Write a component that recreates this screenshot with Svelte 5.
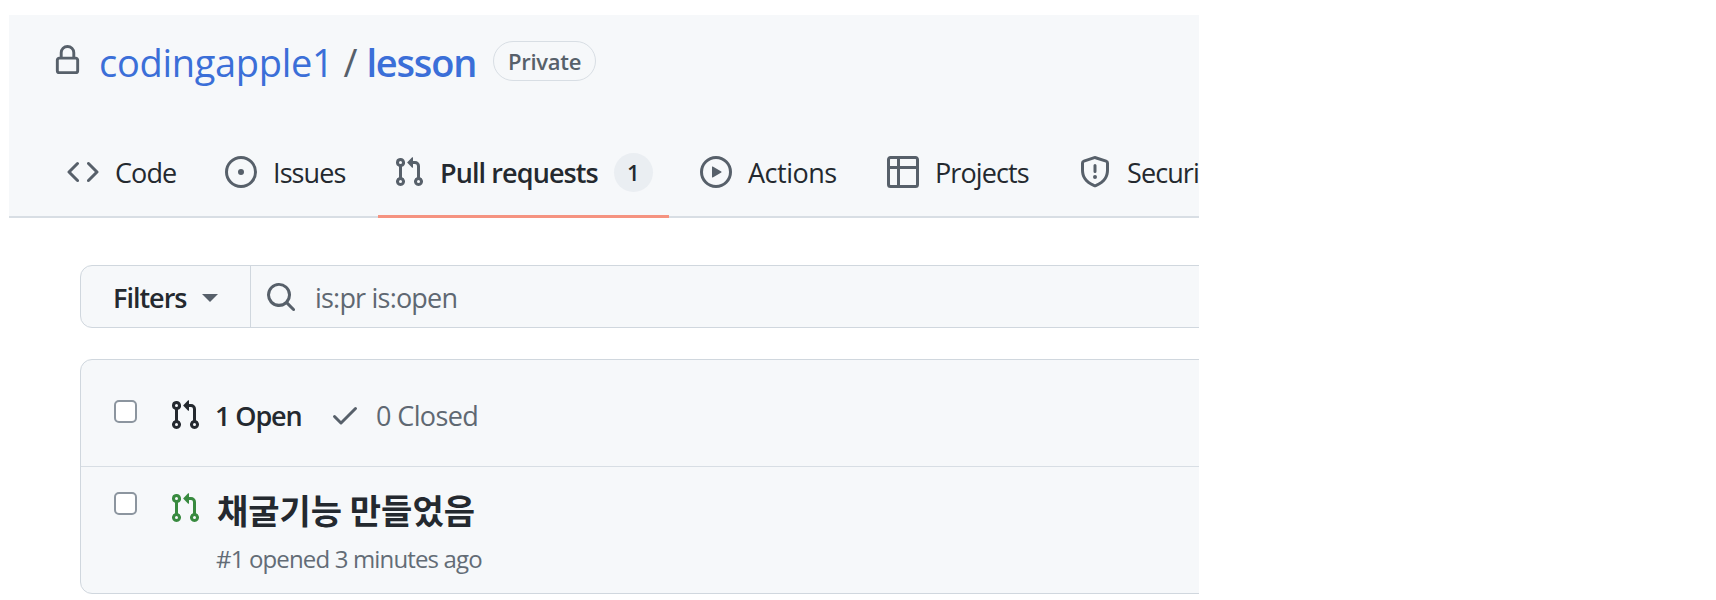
<script>
  const icons = {
    lock: 'M4 4a4 4 0 0 1 8 0v2h.25c.966 0 1.75.784 1.75 1.75v5.5A1.75 1.75 0 0 1 12.25 15h-8.5A1.75 1.75 0 0 1 2 13.25v-5.5C2 6.784 2.784 6 3.75 6H4Zm8.25 3.5h-8.5a.25.25 0 0 0-.25.25v5.5c0 .138.112.25.25.25h8.5a.25.25 0 0 0 .25-.25v-5.5a.25.25 0 0 0-.25-.25ZM10.5 6V4a2.5 2.5 0 1 0-5 0v2Z',
    code: 'm11.28 3.22 4.25 4.25a.75.75 0 0 1 0 1.06l-4.25 4.25a.749.749 0 0 1-1.275-.326.749.749 0 0 1 .215-.734L13.94 8l-3.72-3.72a.749.749 0 0 1 .326-1.275.749.749 0 0 1 .734.215Zm-6.56 0a.751.751 0 0 1 1.042.018.751.751 0 0 1 .018 1.042L2.06 8l3.72 3.72a.749.749 0 0 1-.326 1.275.749.749 0 0 1-.734-.215L.47 8.53a.75.75 0 0 1 0-1.06Z',
    issue: 'M8 9.5a1.5 1.5 0 1 0 0-3 1.5 1.5 0 0 0 0 3ZM8 0a8 8 0 1 1 0 16A8 8 0 0 1 8 0ZM1.5 8a6.5 6.5 0 1 0 13 0 6.5 6.5 0 0 0-13 0Z',
    pr: 'M1.5 3.25a2.25 2.25 0 1 1 3 2.122v5.256a2.251 2.251 0 1 1-1.5 0V5.372A2.25 2.25 0 0 1 1.5 3.25Zm5.677-.177L9.573.677A.25.25 0 0 1 10 .854V2.5h1A2.5 2.5 0 0 1 13.5 5v5.628a2.251 2.251 0 1 1-1.5 0V5a1 1 0 0 0-1-1h-1v1.646a.25.25 0 0 1-.427.177L7.177 3.427a.25.25 0 0 1 0-.354ZM3.75 2.5a.75.75 0 1 0 0 1.5.75.75 0 0 0 0-1.5Zm0 9.5a.75.75 0 1 0 0 1.5.75.75 0 0 0 0-1.5Zm8.25.75a.75.75 0 1 0 1.5 0 .75.75 0 0 0-1.5 0Z',
    play: 'M8 0a8 8 0 1 1 0 16A8 8 0 0 1 8 0ZM1.5 8a6.5 6.5 0 1 0 13 0 6.5 6.5 0 0 0-13 0Zm4.879-2.773 4.264 2.559a.25.25 0 0 1 0 .428l-4.264 2.559A.25.25 0 0 1 6 10.559V5.442a.25.25 0 0 1 .379-.215Z',
    table: 'M0 1.75C0 .784.784 0 1.75 0h12.5C15.216 0 16 .784 16 1.75v12.5A1.75 1.75 0 0 1 14.25 16H1.75A1.75 1.75 0 0 1 0 14.25ZM6.5 6.5v8h7.75a.25.25 0 0 0 .25-.25V6.5Zm8-1.5V1.75a.25.25 0 0 0-.25-.25H6.5V5Zm-13 1.5v7.75c0 .138.112.25.25.25H5v-8ZM5 5V1.5H1.75a.25.25 0 0 0-.25.25V5Z',
    shield: 'M7.467.133a1.748 1.748 0 0 1 1.066 0l5.25 1.68A1.75 1.75 0 0 1 15 3.48V7c0 1.566-.32 3.182-1.303 4.682-.983 1.498-2.585 2.813-5.032 3.855a1.697 1.697 0 0 1-1.33 0c-2.447-1.042-4.049-2.357-5.032-3.855C1.32 10.182 1 8.566 1 7V3.48a1.75 1.75 0 0 1 1.217-1.667Zm.61 1.429a.25.25 0 0 0-.153 0l-5.25 1.68a.25.25 0 0 0-.174.238V7c0 1.358.275 2.666 1.057 3.86.784 1.194 2.121 2.34 4.366 3.297a.196.196 0 0 0 .154 0c2.245-.956 3.582-2.104 4.366-3.298C13.225 9.666 13.5 8.36 13.5 7V3.48a.251.251 0 0 0-.174-.237l-5.25-1.68ZM8.75 4.75v3a.75.75 0 0 1-1.5 0v-3a.75.75 0 0 1 1.5 0ZM9 10.5a1 1 0 1 1-2 0 1 1 0 0 1 2 0Z',
    search: 'M10.68 11.74a6 6 0 0 1-7.922-8.982 6 6 0 0 1 8.982 7.922l3.04 3.04a.749.749 0 0 1-.326 1.275.749.749 0 0 1-.734-.215ZM11.5 7a4.499 4.499 0 1 0-8.997 0A4.499 4.499 0 0 0 11.5 7Z',
    check: 'M13.78 4.22a.75.75 0 0 1 0 1.06l-7.25 7.25a.75.75 0 0 1-1.06 0L2.22 9.28a.751.751 0 0 1 .018-1.042.751.751 0 0 1 1.042-.018L6 10.94l6.72-6.72a.75.75 0 0 1 1.06 0Z'
  };

  const tabs = [
    { name: 'Code', icon: 'code', cls: 'tab-code' },
    { name: 'Issues', icon: 'issue', cls: 'tab-issues' },
    { name: 'Pull requests', icon: 'pr', cls: 'tab-pr', active: true, count: 1 },
    { name: 'Actions', icon: 'play', cls: 'tab-actions' },
    { name: 'Projects', icon: 'table', cls: 'tab-projects' },
    { name: 'Security', icon: 'shield', cls: 'tab-security' }
  ];
</script>

{#snippet icon(d, cls)}
  <svg class={cls} viewBox="0 0 16 16" aria-hidden="true"><path d={d} fill="currentColor" fill-rule="evenodd" /></svg>
{/snippet}

<div class="page">
  <header class="repo-head">
    <div class="title-row">
      {@render icon(icons.lock, 'lock')}
      <a class="owner" href="#owner">codingapple1</a>
      <span class="slash">/</span>
      <a class="repo" href="#repo">lesson</a>
      <span class="private">Private</span>
    </div>
    <nav class="tabs">
      {#each tabs as tab}
        <div class="tab {tab.cls}" class:active={tab.active}>
          {@render icon(icons[tab.icon], 'tab-icon')}
          <span class="tab-label">{tab.name}</span>
          {#if tab.count}
            <span class="counter">{tab.count}</span>
          {/if}
        </div>
      {/each}
    </nav>
  </header>

  <main class="content">
    <div class="filter-bar">
      <button class="filters" type="button">Filters <span class="caret"></span></button>
      <div class="search">
        {@render icon(icons.search, 'search-icon')}
        <span class="query">is:pr is:open</span>
      </div>
    </div>

    <section class="list">
      <div class="list-head">
        <span class="box"></span>
        {@render icon(icons.pr, 'pr-icon')}
        <span class="open-count">1 Open</span>
        {@render icon(icons.check, 'check-icon')}
        <span class="closed-count">0 Closed</span>
      </div>
      <div class="row">
        <span class="box"></span>
        {@render icon(icons.pr, 'pr-icon green')}
        <div class="row-text">
          <div class="row-title">채굴기능 만들었음</div>
          <div class="row-meta">#1 opened 3 minutes ago</div>
        </div>
      </div>
    </section>
  </main>
</div>

<style>
  :global(body) {
    background: #fff;
  }

  .page {
    width: 1199px;
    height: 600px;
    overflow: hidden;
    padding-top: 15px;
    box-sizing: border-box;
    font-family: "Open Sans", "Noto Sans", sans-serif;
    color: #24292f;
  }

  .repo-head {
    margin-left: 9px;
    height: 203px;
    box-sizing: border-box;
    background: #f6f8fa;
    border-bottom: 2px solid #d8dee4;
    display: flex;
    flex-direction: column;
    justify-content: space-between;
  }

  .title-row {
    display: flex;
    align-items: center;
    height: 40px;
    margin-top: 26px;
    padding-left: 43px;
  }

  .lock {
    width: 31px;
    height: 31px;
    margin: -2px 16px 0 0;
    color: #57606a;
    flex: none;
  }

  .owner, .repo {
    color: #3b6fd8;
    text-decoration: none;
    font-size: 38px;
    line-height: 40px;
    padding-top: 2px;
  }

  .owner {
    letter-spacing: -0.3px;
  }

  .repo {
    font-weight: 600;
    letter-spacing: -1.2px;
  }

  .slash {
    font-size: 38px;
    line-height: 40px;
    padding-top: 2px;
    color: #57606a;
    margin: 0 9px 0 10px;
  }

  .private {
    margin-left: 17px;
    width: 103px;
    height: 40px;
    box-sizing: border-box;
    border: 1px solid #d8dee4;
    border-radius: 20px;
    display: flex;
    align-items: center;
    justify-content: center;
    font-size: 22px;
    font-weight: 600;
    letter-spacing: -0.3px;
    color: #57606a;
  }

  .tabs {
    display: flex;
    gap: 16px;
    height: 78px;
    margin-bottom: -2px;
    padding-left: 42px;
  }

  .tab {
    display: flex;
    align-items: center;
    box-sizing: border-box;
    height: 78px;
    padding: 0 0 11px 16px;
    border-bottom: 3px solid transparent;
    font-size: 27px;
    flex: none;
  }

  .tab-code { width: 143px; }
  .tab-issues { width: 152px; padding-left: 15px; }
  .tab-pr { width: 291px; padding-left: 15px; }
  .tab-actions { width: 170px; padding-left: 15px; }
  .tab-projects { width: 176px; }
  .tab-security { width: 200px; }

  .tab-actions .tab-label {
    letter-spacing: -0.5px;
  }

  .tab.active {
    border-bottom-color: #f59380;
    font-weight: 600;
  }

  .tab-icon {
    width: 32px;
    height: 32px;
    margin-right: 16px;
    color: #57606a;
    flex: none;
  }

  .tab.active .tab-icon {
    margin-right: 15px;
  }

  .tab-label {
    letter-spacing: -0.9px;
    white-space: nowrap;
  }

  .counter {
    margin-left: 16px;
    width: 39px;
    height: 39px;
    border-radius: 20px;
    background: #eaeef2;
    display: flex;
    align-items: center;
    justify-content: center;
    font-size: 22px;
    font-weight: 600;
    flex: none;
  }

  .content {
    margin: 47px 0 0 80px;
  }

  .filter-bar {
    display: flex;
    height: 63px;
    width: 1200px;
    box-sizing: border-box;
    border: 1px solid #d0d7de;
    border-radius: 12px;
    background: #f6f8fa;
  }

  .filters {
    width: 170px;
    padding: 2px 0 0 32px;
    text-align: left;
    display: flex;
    align-items: center;
    background: none;
    border: 0;
    border-right: 1px solid #d0d7de;
    font: 600 27px "Open Sans", sans-serif;
    letter-spacing: -1px;
    color: #24292f;
  }

  .caret {
    margin-left: 16px;
    border: 8px solid transparent;
    border-top-color: #57606a;
    border-bottom: 0;
  }

  .search {
    display: flex;
    align-items: center;
    padding-left: 14px;
  }

  .search-icon {
    width: 32px;
    height: 32px;
    color: #57606a;
    margin-right: 18px;
  }

  .query {
    padding-top: 2px;
    font-size: 27px;
    letter-spacing: -0.8px;
    color: #5f6872;
  }

  .list {
    margin-top: 31px;
    width: 1200px;
    height: 235px;
    box-sizing: border-box;
    border: 1px solid #d0d7de;
    border-radius: 12px;
    background: #f6f8fa;
  }

  .list-head {
    display: flex;
    align-items: center;
    height: 107px;
    box-sizing: border-box;
    border-bottom: 1px solid #d8dee4;
    padding: 4px 0 0 33px;
  }

  .box {
    width: 23px;
    height: 23px;
    box-sizing: border-box;
    border: 2px solid #8c959f;
    border-radius: 5px;
    background: #fff;
    flex: none;
  }

  .list-head .box {
    margin-top: -7px;
  }

  .pr-icon {
    width: 32px;
    height: 32px;
    margin-left: 32px;
    color: #24292f;
    flex: none;
  }

  .pr-icon.green {
    color: #388a3f;
  }

  .open-count {
    margin-left: 14px;
    width: 88px;
    font-size: 27px;
    font-weight: 600;
    letter-spacing: -1.1px;
    white-space: nowrap;
  }

  .check-icon {
    width: 32px;
    height: 32px;
    margin-left: 26px;
    color: #57606a;
    flex: none;
  }

  .closed-count {
    margin-left: 15px;
    font-size: 27px;
    letter-spacing: -0.6px;
    color: #5f6872;
  }

  .row {
    display: flex;
    align-items: flex-start;
    padding: 25px 0 0 33px;
  }

  .row-text {
    margin-left: 16px;
  }

  .row-title {
    font-family: "Noto Sans CJK KR", sans-serif;
    font-size: 34px;
    font-weight: 700;
    line-height: 40px;
    margin-top: -2px;
  }

  .row-meta {
    margin: 15px 0 0 -1px;
    font-size: 24px;
    line-height: 28px;
    letter-spacing: -0.85px;
    color: #636c76;
  }
</style>
